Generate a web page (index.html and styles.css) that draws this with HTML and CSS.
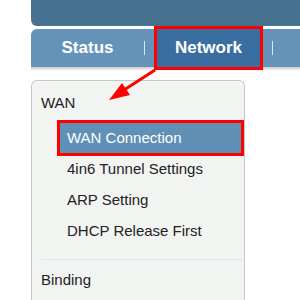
FILE: index.html
```html
<!DOCTYPE html>
<html lang="en">
<head>
  <meta charset="UTF-8">
  <title>Network - WAN</title>
  <link rel="stylesheet" href="styles.css">
</head>
<body>
  <div class="page">
    <div class="header"></div>

    <div class="nav">
      <div class="tab tab-status">Status</div>
      <span class="sep"></span>
      <div class="tab tab-active mark">Network</div>
      <span class="sep"></span>
    </div>
    <div class="nav-shadow"></div>

    <div class="sidebar">
      <div class="group">WAN</div>
      <ul class="submenu">
        <li class="item selected mark">WAN Connection</li>
        <li class="item">4in6 Tunnel Settings</li>
        <li class="item">ARP Setting</li>
        <li class="item">DHCP Release First</li>
      </ul>
      <div class="divider"></div>
      <div class="group">Binding</div>
    </div>

    <svg class="arrow" width="300" height="300" viewBox="0 0 300 300">
      <line x1="155" y1="70" x2="124" y2="90" stroke="#f00" stroke-width="3"/>
      <polygon points="109,100 130,95 122,83" fill="#f00"/>
    </svg>
  </div>
</body>
</html>
```

FILE: styles.css
```css
body {
  margin: 0;
  background: #fff;
  font-family: "Liberation Sans", Arial, sans-serif;
}
.page {
  position: relative;
  width: 300px;
  height: 300px;
  overflow: hidden;
  padding-left: 31px;
  box-sizing: border-box;
}
.header {
  height: 26px;
  background: #46718f;
  border-bottom-left-radius: 6px;
}
.nav {
  margin-top: 3px;
  height: 38px;
  background: #6592b8;
  border-top-left-radius: 6px;
  display: flex;
  align-items: center;
}
.tab {
  color: #fff;
  font-weight: bold;
  font-size: 17px;
  text-align: center;
  height: 38px;
  line-height: 38px;
}
.tab-status { width: 113px; }
.tab-active {
  width: 103px;
  margin: 0 12px;
  background: #3a6ea0;
}
.sep {
  width: 1px;
  height: 14px;
  background: rgba(255, 255, 255, 0.8);
}
.nav-shadow {
  height: 4px;
  background: linear-gradient(#c9c9c9, #fff);
}
.mark { outline: 3px solid #f00; }
.sidebar {
  margin-top: 9px;
  width: 214px;
  box-sizing: border-box;
  height: 240px;
  background: #f2f4f2;
  border: 1px solid #c8c8c8;
  border-bottom: none;
  border-top-left-radius: 6px;
  border-top-right-radius: 6px;
  padding: 7px 3px 0 9px;
  color: #222;
  font-size: 15px;
}
.group {
  line-height: 30px;
}
.submenu {
  list-style: none;
  margin: 5px 0 0 19px;
  padding: 0;
}
.item {
  height: 31px;
  line-height: 31px;
  padding-left: 7px;
}
.item.selected {
  height: 30px;
  line-height: 30px;
  background: #6090b6;
  color: #fff;
}
.divider {
  margin: 13px -3px 5px 0;
  height: 1px;
  background: #dde5ee;
}
.arrow {
  position: absolute;
  left: 0;
  top: 0;
  pointer-events: none;
}
```
